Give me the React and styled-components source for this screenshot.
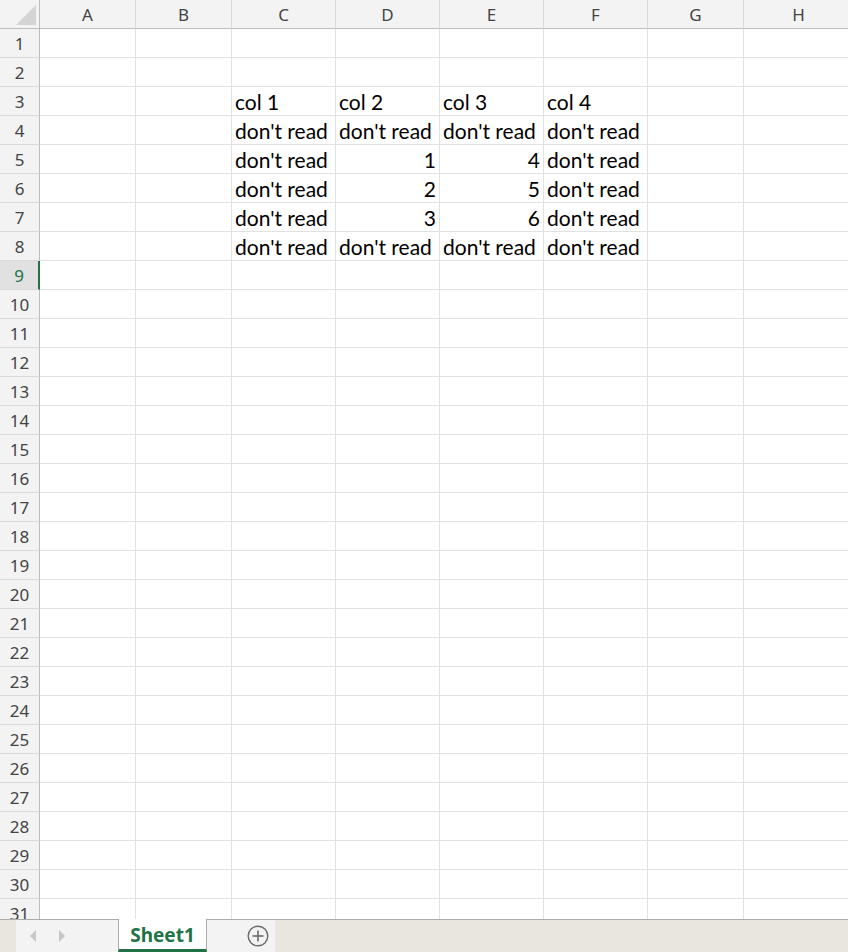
import styled, { createGlobalStyle } from 'styled-components';

const GlobalStyle = createGlobalStyle`
  html, body {
    margin: 0;
    padding: 0;
    background: #ffffff;
  }
  * {
    box-sizing: border-box;
  }
`;

const COLUMNS = [
  { name: 'A', width: 96 },
  { name: 'B', width: 96 },
  { name: 'C', width: 104 },
  { name: 'D', width: 104 },
  { name: 'E', width: 104 },
  { name: 'F', width: 104 },
  { name: 'G', width: 96 },
  { name: 'H', width: 110 },
];

const DATA = {
  3: { C: 'col 1', D: 'col 2', E: 'col 3', F: 'col 4' },
  4: { C: "don't read", D: "don't read", E: "don't read", F: "don't read" },
  5: { C: "don't read", D: 1, E: 4, F: "don't read" },
  6: { C: "don't read", D: 2, E: 5, F: "don't read" },
  7: { C: "don't read", D: 3, E: 6, F: "don't read" },
  8: { C: "don't read", D: "don't read", E: "don't read", F: "don't read" },
};

const ROW_COUNT = 31;
const SELECTED_ROW = 9;

const Window = styled.div`
  width: 848px;
  height: 952px;
  display: flex;
  flex-direction: column;
  overflow: hidden;
  background: #ffffff;
`;

const Sheet = styled.div`
  flex: 1;
  overflow: hidden;
  display: flex;
  flex-direction: column;
`;

const Row = styled.div`
  display: flex;
  flex-shrink: 0;
  height: 29px;
`;

const Corner = styled.div`
  position: relative;
  width: 40px;
  flex-shrink: 0;
  background: #f3f3f3;
  border-right: 1px solid #bdbdbd;
  border-bottom: 1px solid #bdbdbd;
`;

const CornerTriangle = styled.svg`
  position: absolute;
  left: 15px;
  top: 4px;
`;

const ColHeader = styled.div`
  width: ${(p) => p.$width}px;
  flex-shrink: 0;
  display: flex;
  align-items: center;
  justify-content: center;
  background: #f3f3f3;
  border-right: 1px solid #dadada;
  border-bottom: 1px solid #bdbdbd;
  font-family: 'Noto Sans', 'Open Sans', sans-serif;
  font-size: 17px;
  color: #444444;
  padding-top: 1px;
`;

const RowHeader = styled.div`
  width: 40px;
  flex-shrink: 0;
  display: flex;
  align-items: center;
  justify-content: center;
  background: ${(p) => (p.$selected ? '#e1e1e1' : '#f3f3f3')};
  border-right: ${(p) => (p.$selected ? '2px solid #217346' : '1px solid #bdbdbd')};
  border-bottom: 1px solid #dadada;
  font-family: 'Noto Sans', 'Open Sans', sans-serif;
  font-size: 17px;
  color: ${(p) => (p.$selected ? '#217346' : '#444444')};
  padding-top: 1px;
`;

const Cell = styled.div`
  width: ${(p) => p.$width}px;
  flex-shrink: 0;
  display: flex;
  align-items: center;
  justify-content: ${(p) => (p.$numeric ? 'flex-end' : 'flex-start')};
  padding: 1px 3px 0 3px;
  border-right: 1px solid #e1e1e1;
  border-bottom: 1px solid #e1e1e1;
  font-family: Lato, 'Open Sans', sans-serif;
  font-size: 21px;
  color: #000000;
  white-space: nowrap;
  overflow: visible;
`;

const TabBar = styled.div`
  height: 33px;
  flex-shrink: 0;
  display: flex;
  background: #e8e6df;
  border-top: 1px solid #ababab;
`;

const Gutter = styled.div`
  width: 16px;
  flex-shrink: 0;
  background: #e8e6df;
`;

const NavArea = styled.div`
  width: 102px;
  flex-shrink: 0;
  display: flex;
  align-items: center;
  gap: 19px;
  padding-left: 12px;
  background: #f3f3f3;
`;

const NavButton = styled.svg`
  display: block;
`;

const Tab = styled.div`
  width: 89px;
  flex-shrink: 0;
  margin-top: -1px;
  display: flex;
  align-items: center;
  justify-content: center;
  background: #ffffff;
  border-left: 1px solid #ababab;
  border-right: 1px solid #ababab;
  border-bottom: 3px solid #217346;
  font-family: 'Noto Sans', 'Open Sans', sans-serif;
  font-weight: 700;
  font-size: 19px;
  color: #217346;
  padding-top: 1px;
`;

const AddArea = styled.div`
  width: 68px;
  flex-shrink: 0;
  display: flex;
  align-items: center;
  padding-left: 40px;
  background: #f3f3f3;
`;

const Filler = styled.div`
  flex: 1;
`;

function HeaderRow() {
  return (
    <Row>
      <Corner>
        <CornerTriangle width="22" height="22" viewBox="0 0 22 22">
          <polygon points="21,1 21,21 1,21" fill="#d4d4d4" />
        </CornerTriangle>
      </Corner>
      {COLUMNS.map((c) => (
        <ColHeader key={c.name} $width={c.width}>
          {c.name}
        </ColHeader>
      ))}
    </Row>
  );
}

function SheetRow({ index }) {
  const values = DATA[index] || {};
  return (
    <Row>
      <RowHeader $selected={index === SELECTED_ROW}>{index}</RowHeader>
      {COLUMNS.map((c) => {
        const v = values[c.name];
        return (
          <Cell key={c.name} $width={c.width} $numeric={typeof v === 'number'}>
            {v}
          </Cell>
        );
      })}
    </Row>
  );
}

export default function App() {
  const rows = Array.from({ length: ROW_COUNT }, (_, i) => i + 1);
  return (
    <Window>
      <GlobalStyle />
      <Sheet>
        <HeaderRow />
        {rows.map((r) => (
          <SheetRow key={r} index={r} />
        ))}
      </Sheet>
      <TabBar>
        <Gutter />
        <NavArea>
          <NavButton width="10" height="14" viewBox="0 0 10 14">
            <polygon points="8,1 2,7 8,13" fill="#c6c6c6" />
          </NavButton>
          <NavButton width="10" height="14" viewBox="0 0 10 14">
            <polygon points="2,1 8,7 2,13" fill="#c6c6c6" />
          </NavButton>
        </NavArea>
        <Tab>Sheet1</Tab>
        <AddArea>
          <svg width="22" height="22" viewBox="0 0 22 22">
            <circle cx="11" cy="11" r="9.8" fill="none" stroke="#6b6b6b" strokeWidth="1.4" />
            <line x1="11" y1="5.5" x2="11" y2="16.5" stroke="#6b6b6b" strokeWidth="1.6" />
            <line x1="5.5" y1="11" x2="16.5" y2="11" stroke="#6b6b6b" strokeWidth="1.6" />
          </svg>
        </AddArea>
        <Filler />
      </TabBar>
    </Window>
  );
}
